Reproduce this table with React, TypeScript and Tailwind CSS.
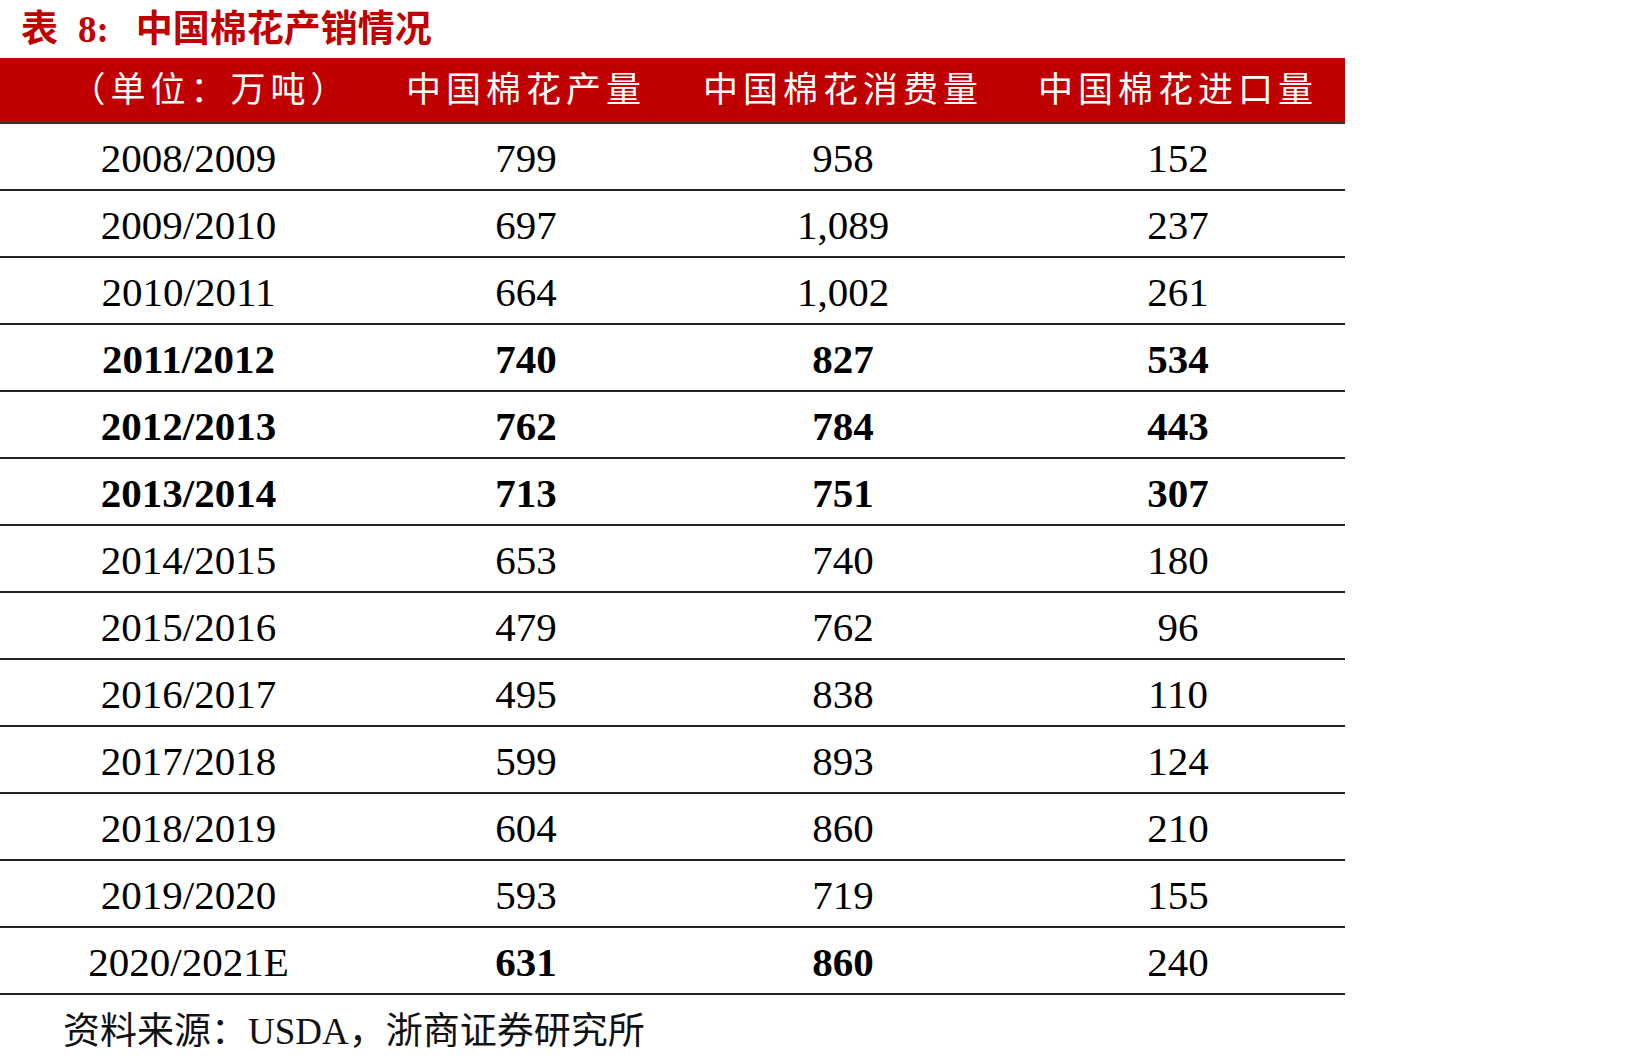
type Row = { year: string; prod: string; cons: string; imp: string; bold: boolean[] };

const serif = "font-['Liberation_Serif','Noto_Sans_CJK_SC',serif]";

const rows: Row[] = [
  { year: "2008/2009", prod: "799", cons: "958", imp: "152", bold: [false, false, false, false] },
  { year: "2009/2010", prod: "697", cons: "1,089", imp: "237", bold: [false, false, false, false] },
  { year: "2010/2011", prod: "664", cons: "1,002", imp: "261", bold: [false, false, false, false] },
  { year: "2011/2012", prod: "740", cons: "827", imp: "534", bold: [true, true, true, true] },
  { year: "2012/2013", prod: "762", cons: "784", imp: "443", bold: [true, true, true, true] },
  { year: "2013/2014", prod: "713", cons: "751", imp: "307", bold: [true, true, true, true] },
  { year: "2014/2015", prod: "653", cons: "740", imp: "180", bold: [false, false, false, false] },
  { year: "2015/2016", prod: "479", cons: "762", imp: "96", bold: [false, false, false, false] },
  { year: "2016/2017", prod: "495", cons: "838", imp: "110", bold: [false, false, false, false] },
  { year: "2017/2018", prod: "599", cons: "893", imp: "124", bold: [false, false, false, false] },
  { year: "2018/2019", prod: "604", cons: "860", imp: "210", bold: [false, false, false, false] },
  { year: "2019/2020", prod: "593", cons: "719", imp: "155", bold: [false, false, false, false] },
  { year: "2020/2021E", prod: "631", cons: "860", imp: "240", bold: [false, true, true, false] },
];

const cols = "grid grid-cols-[377px_298px_336px_334px]";

export default function App() {
  return (
    <div className={`w-[1646px] h-[1062px] bg-white ${serif}`}>
      <div className="h-[58px] pl-[21px] flex items-center text-[37px] font-bold text-[#c00000] leading-none">
        <span>表</span>
        <span className="ml-[20px]">8:</span>
        <span className="ml-[27px]">中国棉花产销情况</span>
      </div>

      <div className="w-[1345px]">
        <div className={`${cols} h-[66px] bg-[#c00000] border-b-2 border-[#333] text-white text-[35px] tracking-[5px] leading-none`}>
          <div className="flex items-center justify-center pl-[44px]">（单位：万吨）</div>
          <div className="flex items-center justify-center">中国棉花产量</div>
          <div className="flex items-center justify-center">中国棉花消费量</div>
          <div className="flex items-center justify-center">中国棉花进口量</div>
        </div>

        {rows.map((r) => (
          <div
            key={r.year}
            className={`${cols} h-[67px] border-b-2 border-[#222] text-[41px] text-black leading-none`}
          >
            {[r.year, r.prod, r.cons, r.imp].map((v, i) => (
              <div
                key={i}
                className={`flex items-center justify-center pt-[3px] ${r.bold[i] ? "font-bold" : "font-normal"}`}
              >
                {v}
              </div>
            ))}
          </div>
        ))}
      </div>

      <div className="pl-[63px] pt-[18px] text-[37px] leading-none text-[#111]">
        资料来源：USDA，浙商证券研究所
      </div>
    </div>
  );
}
